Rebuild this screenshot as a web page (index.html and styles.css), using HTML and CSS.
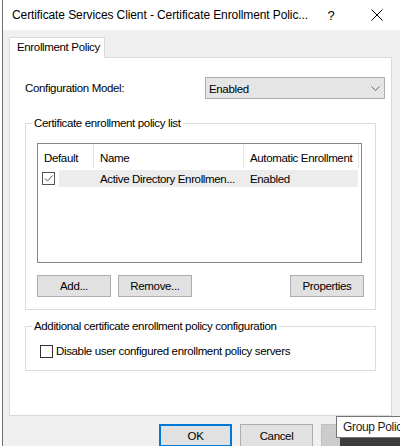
FILE: index.html
```html
<!DOCTYPE html>
<html lang="en">
<head>
  <meta charset="UTF-8" />
  <title>Certificate Enrollment Policy</title>
  <link rel="stylesheet" href="styles.css">
</head>
<body>
  <!-- window behind the dialog -->
  <div class="bg-strip"></div>

  <div class="dialog">
    <!-- Title bar -->
    <div class="titlebar">
      <span class="title">Certificate Services Client - Certificate Enrollment Polic...</span>
      <span class="tb-btn help">?</span>
      <span class="tb-btn close">
        <svg width="12" height="12" viewBox="0 0 12 12"><path d="M0.5 0.5 L11.5 11.5 M11.5 0.5 L0.5 11.5" stroke="#000" stroke-width="1" fill="none"/></svg>
      </span>
    </div>

    <div class="dlg-body">
      <div class="tabs">
        <div class="tab">Enrollment Policy</div>
      </div>

      <div class="panel">
        <div class="config-row">
          <span class="config-label">Configuration Model:</span>
          <div class="combo">
            <span>Enabled</span>
            <svg width="9" height="5" viewBox="0 0 9 5"><path d="M0.5 0.5 L4.5 4.5 L8.5 0.5" stroke="#666" stroke-width="1" fill="none"/></svg>
          </div>
        </div>

        <!-- Policy list group -->
        <div class="group group-list">
          <div class="group-title">Certificate enrollment policy list</div>
          <div class="group-body list-body">
            <div class="listview">
              <div class="lv-header">
                <div class="col col-default">Default</div>
                <div class="col col-name">Name</div>
                <div class="col col-auto">Automatic Enrollment</div>
              </div>
              <div class="lv-row">
                <div class="col col-default">
                  <span class="check checked">
                    <svg width="11" height="11" viewBox="0 0 11 11"><path d="M2 5.5 L4.5 8 L9.5 2.5" stroke="#555" stroke-width="1" fill="none"/></svg>
                  </span>
                </div>
                <div class="sel">
                  <div class="col col-name-sel">Active Directory Enrollmen...</div>
                  <div class="col col-auto">Enabled</div>
                </div>
              </div>
            </div>
            <div class="list-buttons">
              <button class="btn">Add...</button>
              <button class="btn">Remove...</button>
              <button class="btn push-right">Properties</button>
            </div>
          </div>
        </div>

        <!-- Additional config group -->
        <div class="group group-extra">
          <div class="group-title">Additional certificate enrollment policy configuration</div>
          <div class="group-body extra-body">
            <label class="check-row">
              <span class="check"></span>
              <span>Disable user configured enrollment policy servers</span>
            </label>
          </div>
        </div>
      </div>

      <div class="dlg-buttons">
        <button class="btn btn-default">OK</button>
        <button class="btn">Cancel</button>
        <button class="btn btn-disabled">Apply</button>
      </div>
    </div>
  </div>

  <!-- tooltip over the Apply button -->
  <div class="tooltip">Group Policy</div>
  <div class="taskbar-bit"></div>
</body>
</html>
```

FILE: styles.css
```css
:root {
  --face: #f0f0f0;
  --btn: #e1e1e1;
  --btn-border: #adadad;
  --group-border: #dcdcdc;
  --tab-border: #d9d9d9;
  --text: #000;
}

body {
  margin: 0;
  width: 400px;
  height: 446px;
  overflow: hidden;
  display: flex;
  font-family: "Liberation Sans", Arial, sans-serif;
  font-size: 11.5px;
  letter-spacing: -0.35px;
  color: var(--text);
  background: #fff;
}

button {
  font: inherit;
  letter-spacing: inherit;
  color: inherit;
}

/* Background window edge */
.bg-strip {
  width: 2px;
  background: #fff;
  border-right: 1px solid #707070;
  flex-shrink: 0;
}

.dialog {
  flex: 1;
  display: flex;
  flex-direction: column;
  background: var(--face);
}

/* Title bar */
.titlebar {
  height: 30px;
  flex-shrink: 0;
  background: #fff;
  display: flex;
  align-items: center;
  padding-left: 9px;
}
.title {
  flex: 1;
  font-size: 12px;
  letter-spacing: -0.1px;
  white-space: nowrap;
  overflow: hidden;
}
.tb-btn {
  width: 46px;
  height: 30px;
  display: flex;
  align-items: center;
  justify-content: center;
}
.help {
  font-size: 13px;
}

/* Body */
.dlg-body {
  padding: 7px 0 0 6px;
}
.tabs {
  display: flex;
}
.tab {
  position: relative;
  z-index: 1;
  width: 96px;
  height: 21px;
  box-sizing: border-box;
  margin-bottom: -1px;
  background: #fff;
  border: 1px solid var(--tab-border);
  border-bottom: none;
  padding: 3px 0 0 7px;
}
.panel {
  width: 383px;
  height: 359px;
  box-sizing: border-box;
  background: #fff;
  border: 1px solid var(--tab-border);
  padding: 19px 0 0 15px;
}

.config-row {
  display: flex;
  align-items: center;
  height: 22px;
}
.config-label {
  width: 180px;
}
.combo {
  width: 180px;
  height: 22px;
  box-sizing: border-box;
  background: #e5e5e5;
  border: 1px solid var(--btn-border);
  display: flex;
  align-items: center;
  justify-content: space-between;
  padding: 1px 4px 0 3px;
}

/* Group boxes */
.group {
  width: 351px;
  box-sizing: border-box;
  border: 1px solid var(--group-border);
}
.group-list {
  margin-top: 24px;
}
.group-extra {
  margin-top: 16px;
}
.group-title {
  width: fit-content;
  margin: -9px 0 0 6px;
  padding: 0 2px;
  line-height: 16px;
  height: 16px;
  background: #fff;
}
.list-body {
  padding: 12px 11px 12px 11px;
}
.extra-body {
  padding: 9px 0 11px 14px;
}

/* List view */
.listview {
  width: 325px;
  height: 120px;
  box-sizing: border-box;
  border: 1px solid #828790;
}
.col {
  box-sizing: border-box;
  flex-shrink: 0;
}
.lv-header {
  display: flex;
  height: 24px;
  align-items: stretch;
}
.lv-header .col {
  display: flex;
  align-items: center;
  padding-left: 6px;
  padding-top: 4px;
  border-right: 1px solid #e5e5e5;
}
.col-default { width: 56px; }
.col-name { width: 150px; }
.col-auto { width: 115px; }
.lv-row {
  display: flex;
  height: 17px;
  margin-top: 2px;
}
.lv-row .col-default {
  padding-left: 4px;
  display: flex;
  align-items: center;
}
.sel {
  display: flex;
  align-items: center;
  margin-left: -35px;
  width: 299px;
  background: #ececec;
}
.col-name-sel {
  width: 185px;
  padding-left: 41px;
  white-space: nowrap;
}
.lv-row .col-auto {
  width: 114px;
  padding-left: 6px;
}

.check {
  width: 13px;
  height: 13px;
  box-sizing: border-box;
  border: 1px solid #333;
  background: #fff;
  display: inline-flex;
  align-items: center;
  justify-content: center;
  flex-shrink: 0;
}
.check.checked {
  border-color: #555;
}

.list-buttons {
  display: flex;
  gap: 7px;
  margin-top: 12px;
}
.btn {
  width: 74px;
  height: 22px;
  box-sizing: border-box;
  background: var(--btn);
  border: 1px solid var(--btn-border);
  padding: 0;
  border-radius: 0;
}
.push-right {
  margin-left: auto;
}

.check-row {
  display: flex;
  align-items: center;
  gap: 3px;
  height: 16px;
}

/* Dialog buttons */
.dlg-buttons {
  display: flex;
  justify-content: flex-end;
  gap: 8px;
  margin-top: 8px;
  padding-right: 6px;
}
.dlg-buttons .btn {
  width: 73px;
  height: 23px;
}
.btn-default {
  border: 2px solid #0078d7;
}
.btn-disabled {
  background: #cccccc;
  border-color: #bfbfbf;
  color: #a0a0a0;
}

/* Overlays */
.tooltip {
  position: absolute;
  left: 336px;
  top: 416px;
  width: 80px;
  height: 22px;
  box-sizing: border-box;
  background: #fff;
  border: 1px solid #767676;
  padding: 3px 0 0 6px;
  font-size: 12px;
  white-space: nowrap;
  color: #1e1e1e;
}
.taskbar-bit {
  position: absolute;
  left: 340px;
  top: 438px;
  width: 60px;
  height: 8px;
  background: #3c3c3c;
}
```
